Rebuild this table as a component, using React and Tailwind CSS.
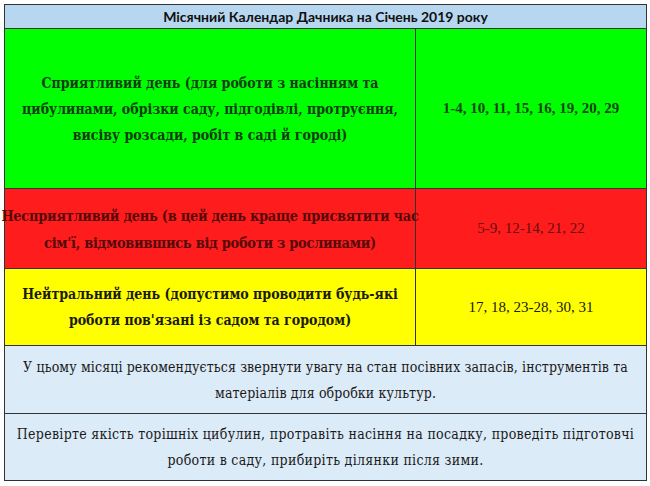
export default function App() {
  return (
    <div className="w-[650px] h-[486px] bg-white pt-[4px] pl-[4px]">
      <div className="w-[643px] border border-[#333] flex flex-col">
        <div className="h-[24px] bg-[#b7d7f0] flex items-center justify-center border-b border-[#333] font-['Lato',sans-serif] font-bold text-[14px] text-[#111]">
          Місячний Календар Дачника на Січень 2019 року
        </div>

        <div className="h-[160px] bg-[#00ff00] flex border-b border-[#333] font-['DejaVu_Serif_Condensed','DejaVu_Serif',serif] font-bold">
          <div className="w-[411px] border-r border-[#333] flex items-center justify-center text-center text-[14px] leading-[26px] text-[#0d3d0d]">
            <p>
              Сприятливий день (для роботи з насінням та<br />
              цибулинами, обрізки саду, підгодівлі, протруєння,<br />
              висіву розсади, робіт в саді й городі)
            </p>
          </div>
          <div className="flex-1 flex items-center justify-center text-[15px] text-[#154515] font-['Liberation_Serif',serif]">
            1-4, 10, 11, 15, 16, 19, 20, 29
          </div>
        </div>

        <div className="h-[80px] bg-[#ff1c1c] flex border-b border-[#333] font-['DejaVu_Serif_Condensed','DejaVu_Serif',serif] font-bold">
          <div className="w-[411px] border-r border-[#333] flex items-center justify-center text-center text-[14.4px] leading-[27px] text-[#560a0a] tracking-[-0.25px] whitespace-nowrap">
            <p>
              Несприятливий день (в цей день краще присвятити час<br />
              сім'ї, відмовившись від роботи з рослинами)
            </p>
          </div>
          <div className="flex-1 flex items-center justify-center text-[15px] text-[#640f0f] font-normal font-['Liberation_Serif',serif]">
            5-9, 12-14, 21, 22
          </div>
        </div>

        <div className="h-[77px] bg-[#ffff00] flex border-b border-[#333] font-['DejaVu_Serif_Condensed','DejaVu_Serif',serif] font-bold">
          <div className="w-[411px] border-r border-[#333] flex items-center justify-center text-center text-[14px] leading-[26px] text-[#1a1a10]">
            <p>
              Нейтральний день (допустимо проводити будь-які<br />
              роботи пов'язані із садом та городом)
            </p>
          </div>
          <div className="flex-1 flex items-center justify-center text-[15px] text-[#1a1a10] font-normal font-['Liberation_Serif',serif]">
            17, 18, 23-28, 30, 31
          </div>
        </div>

        <div className="h-[68px] bg-[#dcebf8] flex items-center justify-center text-center border-b border-[#333] font-['DejaVu_Serif_Condensed','DejaVu_Serif',serif] text-[14px] leading-[26px] text-[#1a1a1a] tracking-[0.12px]">
          <p>
            У цьому місяці рекомендується звернути увагу на стан посівних запасів, інструментів та<br />
            матеріалів для обробки культур.
          </p>
        </div>

        <div className="h-[66px] bg-[#dcebf8] flex items-center justify-center text-center font-['DejaVu_Serif_Condensed','DejaVu_Serif',serif] text-[14px] leading-[26px] text-[#1a1a1a] tracking-[0.3px]">
          <p>
            Перевірте якість торішніх цибулин, протравіть насіння на посадку, проведіть підготовчі<br />
            роботи в саду, прибиріть ділянки після зими.
          </p>
        </div>
      </div>
    </div>
  );
}
